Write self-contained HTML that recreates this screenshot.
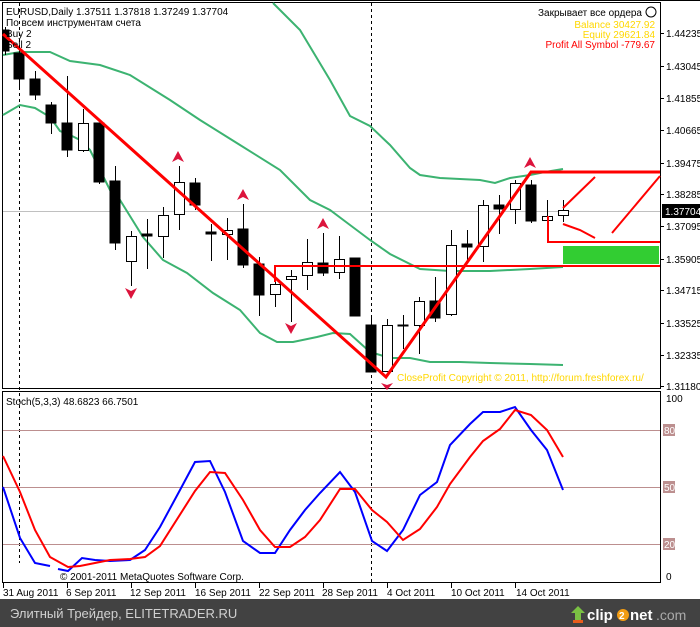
<!DOCTYPE html>
<html><head><meta charset="utf-8"><style>
html,body{margin:0;padding:0;background:#fff;width:700px;height:627px;overflow:hidden}
svg{display:block}
text{font-family:"Liberation Sans","DejaVu Sans",sans-serif;font-size:10px}
</style></head><body>
<svg width="700" height="627" viewBox="0 0 700 627" xmlns="http://www.w3.org/2000/svg">
<rect width="700" height="627" fill="#fff"/>
<rect x="2.5" y="2.5" width="658" height="386" fill="none" stroke="#000"/>
<rect x="2.5" y="391.5" width="658" height="191" fill="none" stroke="#000"/>
<line x1="0" y1="0.5" x2="700" y2="0.5" stroke="#000"/>
<line x1="19.5" y1="3" x2="19.5" y2="563" stroke="#000" stroke-dasharray="3,3"/>
<line x1="371.5" y1="3" x2="371.5" y2="583" stroke="#000" stroke-dasharray="3,3"/>
<line x1="3" y1="211.5" x2="660" y2="211.5" stroke="#c0c0c0"/>
<g fill="none" stroke="#3cb371" stroke-width="2">
<polyline points="273,3 300,30 330,80 350,116 370,126 390,145 410,168 420,175 440,178 480,180 495,183 510,178 530,175 545,172 563,169"/>
<polyline points="3,55 20,52 50,52 70,61 100,65 130,75 170,100 200,120 240,145 280,170 310,200 330,210 350,225 370,240 390,254 420,269 450,271 490,271 530,269 563,267"/>
<polyline points="3,115 20,105 35,108 50,117 60,131 70,135 80,140 90,150 100,170 115,200 120,200 143,237 163,260 187,273 213,293 240,310 260,333 277,342 293,342 317,337 333,333 350,334 370,352 390,358 410,358 430,362 460,362 490,363 530,364 563,365"/>
</g>
<g stroke="#000" stroke-width="1" shape-rendering="crispEdges">
<line x1="5.5" y1="27" x2="5.5" y2="55"/><rect x="3" y="30" width="6" height="21" fill="#000"/>
<line x1="19.5" y1="50" x2="19.5" y2="90"/><rect x="14" y="53" width="10" height="26" fill="#000"/>
<line x1="35.5" y1="71" x2="35.5" y2="100"/><rect x="30" y="79" width="10" height="16" fill="#000"/>
<line x1="51.5" y1="102" x2="51.5" y2="134"/><rect x="46" y="105" width="10" height="18" fill="#000"/>
<line x1="67.5" y1="76" x2="67.5" y2="157"/><rect x="62" y="123" width="10" height="27" fill="#000"/>
<line x1="83.5" y1="109" x2="83.5" y2="152"/><rect x="78.5" y="123.5" width="10" height="27" fill="#fff"/>
<line x1="99.5" y1="123" x2="99.5" y2="184"/><rect x="94" y="123" width="10" height="59" fill="#000"/>
<line x1="115.5" y1="166" x2="115.5" y2="250"/><rect x="110" y="181" width="10" height="62" fill="#000"/>
<line x1="131.5" y1="231" x2="131.5" y2="286"/><rect x="126.5" y="236.5" width="10" height="25" fill="#fff"/>
<line x1="147.5" y1="219" x2="147.5" y2="269"/><rect x="142" y="234" width="10" height="2" fill="#000"/>
<line x1="163.5" y1="207" x2="163.5" y2="258"/><rect x="158.5" y="215.5" width="10" height="21" fill="#fff"/>
<line x1="179.5" y1="166" x2="179.5" y2="230"/><rect x="174.5" y="182.5" width="10" height="32" fill="#fff"/>
<line x1="195.5" y1="178" x2="195.5" y2="210"/><rect x="190" y="183" width="10" height="22" fill="#000"/>
<line x1="211.5" y1="224" x2="211.5" y2="261"/><rect x="206" y="232" width="10" height="2" fill="#000"/>
<line x1="227.5" y1="218" x2="227.5" y2="260"/><rect x="222.5" y="230.5" width="10" height="4" fill="#fff"/>
<line x1="243.5" y1="204" x2="243.5" y2="268"/><rect x="238" y="229" width="10" height="36" fill="#000"/>
<line x1="259.5" y1="257" x2="259.5" y2="316"/><rect x="254" y="264" width="10" height="31" fill="#000"/>
<line x1="275.5" y1="266" x2="275.5" y2="307"/><rect x="270.5" y="284.5" width="10" height="10" fill="#fff"/>
<line x1="291.5" y1="270" x2="291.5" y2="322"/><rect x="286.5" y="276.5" width="10" height="3" fill="#fff"/>
<line x1="307.5" y1="239" x2="307.5" y2="290"/><rect x="302.5" y="262.5" width="10" height="13" fill="#fff"/>
<line x1="323.5" y1="233" x2="323.5" y2="276"/><rect x="318" y="263" width="10" height="10" fill="#000"/>
<line x1="339.5" y1="236" x2="339.5" y2="279"/><rect x="334.5" y="259.5" width="10" height="13" fill="#fff"/>
<line x1="355.5" y1="258" x2="355.5" y2="316"/><rect x="350" y="258" width="10" height="58" fill="#000"/>
<line x1="371.5" y1="316" x2="371.5" y2="372"/><rect x="366" y="325" width="10" height="47" fill="#000"/>
<line x1="387.5" y1="319" x2="387.5" y2="371"/><rect x="382.5" y="325.5" width="10" height="46" fill="#fff"/>
<line x1="403.5" y1="315" x2="403.5" y2="349"/><rect x="398" y="325" width="10" height="1" fill="#000"/>
<line x1="419.5" y1="297" x2="419.5" y2="354"/><rect x="414.5" y="301.5" width="10" height="24" fill="#fff"/>
<line x1="435.5" y1="277" x2="435.5" y2="322"/><rect x="430" y="301" width="10" height="17" fill="#000"/>
<line x1="451.5" y1="230" x2="451.5" y2="316"/><rect x="446.5" y="245.5" width="10" height="69" fill="#fff"/>
<line x1="467.5" y1="230" x2="467.5" y2="262"/><rect x="462" y="244" width="10" height="3" fill="#000"/>
<line x1="483.5" y1="200" x2="483.5" y2="262"/><rect x="478.5" y="205.5" width="10" height="41" fill="#fff"/>
<line x1="499.5" y1="195" x2="499.5" y2="234"/><rect x="494" y="205" width="10" height="4" fill="#000"/>
<line x1="515.5" y1="180" x2="515.5" y2="224"/><rect x="510.5" y="183.5" width="10" height="26" fill="#fff"/>
<line x1="531.5" y1="180" x2="531.5" y2="223"/><rect x="526" y="185" width="10" height="36" fill="#000"/>
<line x1="547.5" y1="200" x2="547.5" y2="242"/><rect x="542.5" y="216.5" width="10" height="4" fill="#fff"/>
<line x1="563.5" y1="200" x2="563.5" y2="222"/><rect x="558.5" y="210.5" width="10" height="5" fill="#fff"/>
</g>
<g fill="none" stroke="#ff0000" stroke-width="3">
<polyline points="3,34 386,377 531,172 660,172"/>
</g>
<g fill="none" stroke="#ff0000" stroke-width="2">
<polyline points="275,282 275,266 660,266"/>
<polyline points="548,216 548,242 660,242"/>
<line x1="563" y1="208" x2="595" y2="177"/>
<polyline points="563,224 580,230 595,238"/>
<line x1="612" y1="233" x2="660" y2="176"/>
</g>
<rect x="563" y="246" width="96" height="18" fill="#32cd32"/>
<g fill="#dc143c">
<path d="M178,151 L184,162 L178,159 L172,162 Z"/>
<path d="M243,189 L249,200 L243,197 L237,200 Z"/>
<path d="M323,218 L329,229 L323,226 L317,229 Z"/>
<path d="M530,157 L536,168 L530,165 L524,168 Z"/>
<path d="M131,299 L137,288 L131,291 L125,288 Z"/>
<path d="M291,334 L297,323 L291,326 L285,323 Z"/>
<path d="M387,390 L393,383 L387,385 L381,383 Z"/>
</g>
<text x="6" y="15" fill="#000">EURUSD,Daily  1.37511 1.37818 1.37249 1.37704</text>
<text x="6" y="26" fill="#000">По всем инструментам счета</text>
<text x="6" y="37" fill="#000">Buy 2</text>
<text x="6" y="48" fill="#000">Sell 2</text>
<text x="642" y="16" fill="#000" text-anchor="end">Закрывает все ордера</text>
<circle cx="651" cy="12" r="5" fill="none" stroke="#000"/>
<text x="655" y="28" fill="#ffd700" text-anchor="end">Balance 30427.92</text>
<text x="655" y="38" fill="#ffd700" text-anchor="end">Equity 29621.84</text>
<text x="655" y="48" fill="#ff0000" text-anchor="end">Profit All Symbol -779.67</text>
<text x="397" y="381" fill="#ffd700">CloseProfit Copyright © 2011, http://forum.freshforex.ru/</text>
<g fill="#000">
<text x="666" y="37">1.44235</text>
<text x="666" y="70">1.43045</text>
<text x="666" y="102">1.41855</text>
<text x="666" y="134">1.40665</text>
<text x="666" y="167">1.39475</text>
<text x="666" y="198">1.38285</text>
<text x="666" y="230">1.37095</text>
<text x="666" y="263">1.35905</text>
<text x="666" y="294">1.34715</text>
<text x="666" y="327">1.33525</text>
<text x="666" y="359">1.32335</text>
<text x="666" y="390">1.31180</text>
</g>
<g stroke="#000"><line x1="660" y1="33.5" x2="664" y2="33.5"/><line x1="660" y1="66.5" x2="664" y2="66.5"/><line x1="660" y1="98.5" x2="664" y2="98.5"/><line x1="660" y1="130.5" x2="664" y2="130.5"/><line x1="660" y1="163.5" x2="664" y2="163.5"/><line x1="660" y1="194.5" x2="664" y2="194.5"/><line x1="660" y1="226.5" x2="664" y2="226.5"/><line x1="660" y1="259.5" x2="664" y2="259.5"/><line x1="660" y1="290.5" x2="664" y2="290.5"/><line x1="660" y1="323.5" x2="664" y2="323.5"/><line x1="660" y1="355.5" x2="664" y2="355.5"/><line x1="660" y1="386.5" x2="664" y2="386.5"/></g>
<rect x="662" y="204" width="38" height="14" fill="#000"/>
<text x="665" y="215" fill="#fff">1.37704</text>
<g stroke="#bc8f8f"><line x1="3" y1="430.5" x2="660" y2="430.5"/><line x1="3" y1="487.5" x2="660" y2="487.5"/><line x1="3" y1="544.5" x2="660" y2="544.5"/></g>
<text x="6" y="405" fill="#000">Stoch(5,3,3) 48.6823 66.7501</text>
<g fill="none" stroke-width="2">
<polyline stroke="#0000ff" points="3,487 20,538 35,563 50,566"/>
<polyline stroke="#0000ff" points="58,569 68,571 82,558 95,560 110,561 130,560 145,550 160,527 180,490 195,462 210,461 225,492 243,541 260,553 275,553 290,530 305,510 320,493 340,472 355,492 372,541 387,551 403,530 420,495 437,482 450,445 470,424 483,412 500,412 515,407 531,430 547,450 563,490"/>
<polyline stroke="#ff0000" points="3,456 20,492 35,530 50,557 68,567 80,566 110,560 130,559 145,557 160,546 195,491 210,472 225,473 243,500 260,530 275,547 290,547 305,537 320,520 340,489 355,489 372,510 387,522 403,540 420,529 437,507 450,484 470,457 483,441 500,429 515,410 531,415 547,430 563,457"/>
</g>
<text x="60" y="580" fill="#000">© 2001-2011 MetaQuotes Software Corp.</text>
<text x="666" y="402" fill="#000">100</text>
<rect x="663" y="424" width="12" height="12" fill="#bc8f8f"/><text x="664" y="434" fill="#fff">80</text>
<rect x="663" y="481" width="12" height="12" fill="#bc8f8f"/><text x="664" y="491" fill="#fff">50</text>
<rect x="663" y="538" width="12" height="12" fill="#bc8f8f"/><text x="664" y="548" fill="#fff">20</text>
<text x="666" y="580" fill="#000">0</text>
<g fill="#000">
<text x="3" y="596">31 Aug 2011</text>
<text x="66" y="596">6 Sep 2011</text>
<text x="130" y="596">12 Sep 2011</text>
<text x="195" y="596">16 Sep 2011</text>
<text x="259" y="596">22 Sep 2011</text>
<text x="322" y="596">28 Sep 2011</text>
<text x="387" y="596">4 Oct 2011</text>
<text x="451" y="596">10 Oct 2011</text>
<text x="516" y="596">14 Oct 2011</text>
</g>
<g stroke="#000"><line x1="3.5" y1="583" x2="3.5" y2="588"/><line x1="67.5" y1="583" x2="67.5" y2="588"/><line x1="131.5" y1="583" x2="131.5" y2="588"/><line x1="195.5" y1="583" x2="195.5" y2="588"/><line x1="259.5" y1="583" x2="259.5" y2="588"/><line x1="323.5" y1="583" x2="323.5" y2="588"/><line x1="387.5" y1="583" x2="387.5" y2="588"/><line x1="451.5" y1="583" x2="451.5" y2="588"/><line x1="515.5" y1="583" x2="515.5" y2="588"/></g>
<rect x="0" y="599" width="700" height="28" fill="#424242"/>
<text x="10" y="618" fill="#d0d0d0" style="font-size:13px">Элитный Трейдер, ELITETRADER.RU</text>
<path d="M578,606 L585,613 L581,613 L581,620 L575,620 L575,613 L571,613 Z" fill="#7ac143"/>
<rect x="573" y="620" width="10" height="3" fill="#e85c1c"/>
<text x="587" y="620" fill="#fff" style="font-size:15px;font-weight:bold">clip</text>
<circle cx="623" cy="615" r="6" fill="#f39c12"/>
<text x="619" y="619" fill="#fff" style="font-size:10px;font-weight:bold">2</text>
<text x="630" y="620" fill="#fff" style="font-size:15px;font-weight:bold">net</text>
<text x="656" y="620" fill="#aaa" style="font-size:14px">.com</text>
</svg>
</body></html>
